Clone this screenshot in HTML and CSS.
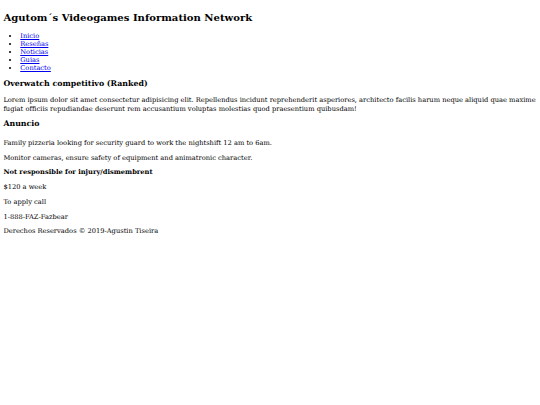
FILE: index.html
```html
<!DOCTYPE html>
<html lang="es">
<head>
<meta charset="utf-8">
<title>Agutom´s Videogames Information Network</title>
<link rel="stylesheet" href="styles.css">
</head>
<body class="page">
<header>
<h1 class="site-title">Agutom´s Videogames Information Network</h1>
<nav>
<ul class="nav-list">
<li><a href="#">Inicio</a></li>
<li><a href="#">Reseñas</a></li>
<li><a href="#">Noticias</a></li>
<li><a href="#">Guias</a></li>
<li><a href="#">Contacto</a></li>
</ul>
</nav>
</header>
<main>
<section>
<h3 class="section-title">Overwatch competitivo (Ranked)</h3>
<p class="text">Lorem ipsum dolor sit amet consectetur adipisicing elit. Repellendus incidunt reprehenderit asperiores, architecto facilis harum neque aliquid quae maxime fugiat officiis repudiandae deserunt rem accusantium voluptas molestias quod praesentium quibusdam!</p>
</section>
<section>
<h3 class="section-title ad-title">Anuncio</h3>
<p class="text">Family pizzeria looking for security guard to work the nightshift 12 am to 6am.</p>
<p class="text">Monitor cameras, ensure safety of equipment and animatronic character.</p>
<p class="text"><strong>Not responsible for injury/dismembrent</strong></p>
<p class="text">$120 a week</p>
<p class="text">To apply call</p>
<p class="text">1-888-FAZ-Fazbear</p>
</section>
</main>
<footer>
<p class="text">Derechos Reservados © 2019-Agustin Tiseira</p>
</footer>
</body>
</html>
```
FILE: styles.css
```css
html {
  background: #ffffff;
}
.page {
  margin: 3.375px;
  font-family: "DejaVu Serif", serif;
  font-size: 6.7px;
  line-height: 8.02px;
  color: #000000;
}
.site-title {
  font-size: 10.05px;
  line-height: 11.81px;
  font-weight: bold;
  margin: 8.2px 0 8.4px;
}
.nav-list {
  margin: 6.75px 0;
  padding-left: 16.875px;
}
.nav-list a {
  color: #0000ee;
}
.section-title {
  font-size: 7.84px;
  line-height: 8.86px;
  font-weight: bold;
  margin: 7.9px 0;
}
.ad-title {
  margin-bottom: 9.6px;
}
.text {
  margin: 6.75px 0;
}
```
